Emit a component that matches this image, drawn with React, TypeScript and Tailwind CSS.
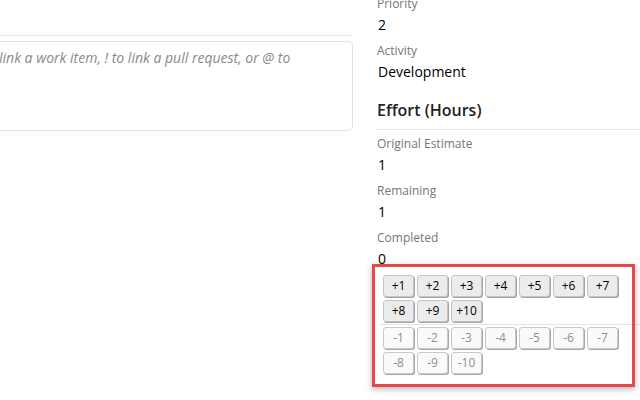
const plus = [1, 2, 3, 4, 5, 6, 7, 8, 9, 10]

function Field({ label, value }: { label: string; value: string }) {
	return (
		<div className="mb-[8px]">
			<div className="h-[16px] text-[12px] leading-[16px] text-[#767676] pl-[2px]">{label}</div>
			<div className="mt-[3px] h-[20px] text-[14px] leading-[20px] text-black pl-[3px]">{value}</div>
		</div>
	)
}

function StepButton({ n, minus }: { n: number; minus?: boolean }) {
	return (
		<button
			className={
				minus
					? 'h-[22px] w-[31px] rounded-[3px] border border-[#c9c9c9] bg-[#fafafa] text-[12px] leading-none text-[#8f8f8f] shadow-[1px_1px_0_#a8a8a8]'
					: 'h-[22px] w-[31px] rounded-[3px] border border-[#c4c4c4] bg-[#ececec] text-[12px] leading-none text-black shadow-[1px_1px_0_#a3a3a3]'
			}
		>
			{minus ? '-' : '+'}
			{n}
		</button>
	)
}

export default function App() {
	return (
		<div className="relative flex h-[400px] w-[640px] overflow-hidden bg-white font-['Open_Sans',sans-serif]">
			{/* left: discussion box */}
			<div className="w-[353px] shrink-0">
				<div className="mt-[35px] h-px w-full bg-[#e6e6e6]" />
				<div className="-ml-[10px] mt-[5px] h-[90px] w-[363px] rounded-[4px] border border-[#e3e3e3] pl-[8px] pt-[5px] text-[14px] italic text-[#8a8a8a]">
					link a work item, ! to link a pull request, or @ to
				</div>
			</div>

			{/* right: details */}
			<div className="ml-[22px] flex-1 -mt-[4px]">
				<Field label="Priority" value="2" />
				<Field label="Activity" value="Development" />
				<h3 className="mt-[17px] h-[22px] pl-[2px] text-[16px] font-semibold leading-[22px] text-[#222]">
					Effort (Hours)
				</h3>
				<div className="mt-[8px] h-px bg-[#e6e6e6]" />
				<div className="mt-[6px]">
					<Field label="Original Estimate" value="1" />
					<Field label="Remaining" value="1" />
					<div>
						<div className="h-[16px] pl-[2px] text-[12px] leading-[16px] text-[#767676]">Completed</div>
						<div className="mt-[3px] h-[20px] pl-[3px] text-[14px] leading-[20px] text-black">0</div>
					</div>
				</div>
				<div className="mt-[6px] pl-[8px]">
					<div className="flex w-[240px] flex-wrap gap-[3px]">
						{plus.map((n) => (
							<StepButton key={n} n={n} />
						))}
					</div>
				</div>
				<div className="ml-[5px] mt-[2px] h-px bg-[#e4e4e4]" />
				<div className="mt-[2px] pl-[8px]">
					<div className="flex w-[240px] flex-wrap gap-[3px]">
						{plus.map((n) => (
							<StepButton key={n} n={n} minus />
						))}
					</div>
				</div>
			</div>

			{/* highlight frame */}
			<div className="pointer-events-none absolute left-[372px] top-[264px] h-[123px] w-[263px] border-[3px] border-[#e5484d] shadow-[0_2px_6px_rgba(0,0,0,0.3)]" />
		</div>
	)
}
